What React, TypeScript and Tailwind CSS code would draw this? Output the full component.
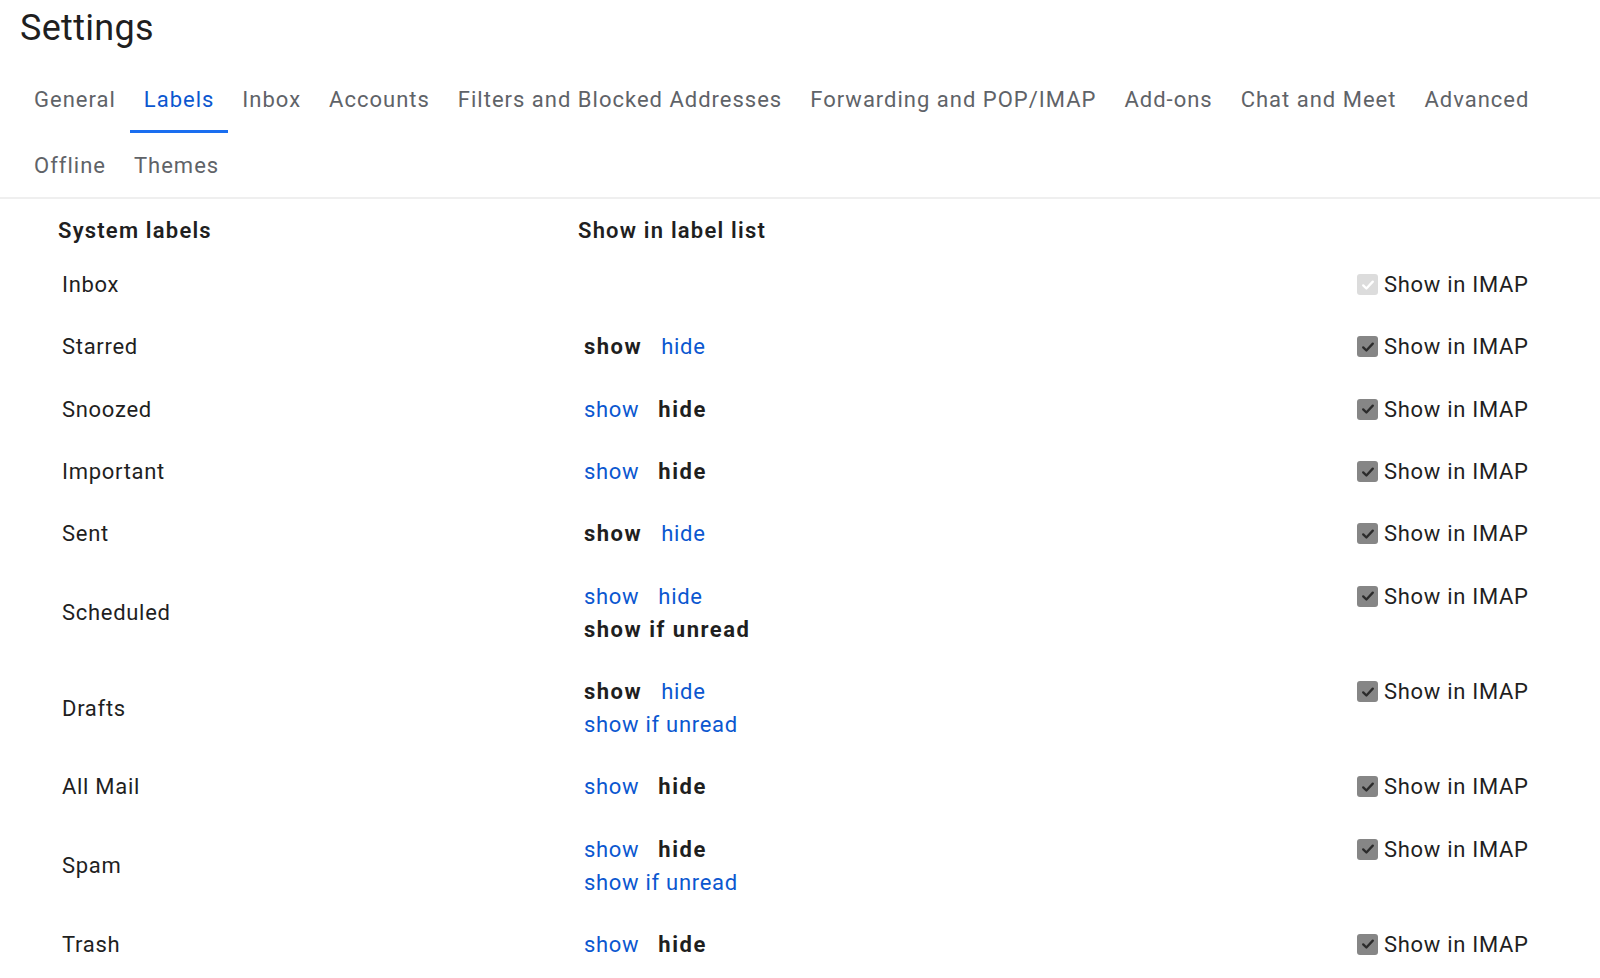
const TABS_ROW1 = [
  'General',
  'Labels',
  'Inbox',
  'Accounts',
  'Filters and Blocked Addresses',
  'Forwarding and POP/IMAP',
  'Add-ons',
  'Chat and Meet',
  'Advanced',
];
const TABS_ROW2 = ['Offline', 'Themes'];

type Choice = 'show' | 'hide' | 'unread';

interface LabelRow {
  name: string;
  selected?: Choice;
  unread?: boolean; // offers "show if unread"
  imapDisabled?: boolean;
}

const ROWS: LabelRow[] = [
  { name: 'Inbox', imapDisabled: true },
  { name: 'Starred', selected: 'show' },
  { name: 'Snoozed', selected: 'hide' },
  { name: 'Important', selected: 'hide' },
  { name: 'Sent', selected: 'show' },
  { name: 'Scheduled', selected: 'unread', unread: true },
  { name: 'Drafts', selected: 'show', unread: true },
  { name: 'All Mail', selected: 'hide' },
  { name: 'Spam', selected: 'hide', unread: true },
  { name: 'Trash', selected: 'hide' },
];

function Tab({ label, active }: { label: string; active?: boolean }) {
  return (
    <div
      className={`px-[14px] flex items-center h-full border-b-[3px] tracking-[1px] ${
        active ? 'text-[#0b57d0] border-[#1a6ef0]' : 'text-[#5f6368] border-transparent'
      }`}
    >
      <span className="pt-[3px]">{label}</span>
    </div>
  );
}

function Option({ text, selected }: { text: string; selected: boolean }) {
  return selected ? (
    <span className="font-bold tracking-[1.5px] text-[#1f1f1f]">{text}</span>
  ) : (
    <span className="text-[#0b57d0] cursor-pointer">{text}</span>
  );
}

function Checkbox({ disabled }: { disabled?: boolean }) {
  return (
    <div
      className={`w-[21px] h-[21px] rounded-[3px] flex items-center justify-center ${
        disabled ? 'bg-[#dcdcdc]' : 'bg-[#868686]'
      }`}
    >
      <svg width="16" height="16" viewBox="0 0 16 16" fill="none">
        <path
          d="M3.2 8.4 L6.4 11.5 L12.8 4.6"
          stroke={disabled ? '#ffffff' : '#2b2b2b'}
          strokeWidth="2.3"
          strokeLinecap="round"
          strokeLinejoin="round"
        />
      </svg>
    </div>
  );
}

export default function App() {
  return (
    <div className="min-h-screen bg-white font-['Roboto','Liberation_Sans',sans-serif] text-[#1f1f1f]">
      <h1 className="pl-[20px] pt-[6px] text-[36px] leading-[44px] font-normal tracking-[0.3px] text-[#1f1f1f]">
        Settings
      </h1>

      <div className="pl-[20px] pt-[16px] text-[22px] border-b-2 border-[#efefef]">
        <div className="flex h-[67px]">
          {TABS_ROW1.map((t) => (
            <Tab key={t} label={t} active={t === 'Labels'} />
          ))}
        </div>
        <div className="flex h-[64px]">
          {TABS_ROW2.map((t) => (
            <Tab key={t} label={t} />
          ))}
        </div>
      </div>

      <div className="text-[22px] leading-[33px] tracking-[0.7px]">
        <div className="flex pt-[15px] pb-[6.5px] font-semibold tracking-[1.2px]">
          <div className="w-[578px] pl-[58px]">System labels</div>
          <div className="w-[779px]">Show in label list</div>
        </div>

        {ROWS.map((row) => (
          <div key={row.name} className="flex py-[14.67px]">
            <div className="w-[578px] pl-[62px] flex items-center">{row.name}</div>
            <div className="w-[779px] pl-[6px]">
              {row.selected && (
                <>
                  <div className="flex gap-[19px]">
                    <Option text="show" selected={row.selected === 'show'} />
                    <Option text="hide" selected={row.selected === 'hide'} />
                  </div>
                  {row.unread && (
                    <div>
                      <Option text="show if unread" selected={row.selected === 'unread'} />
                    </div>
                  )}
                </>
              )}
            </div>
            <div className="flex items-start">
              <div className="flex items-center gap-[6px] h-[33px]">
                <Checkbox disabled={row.imapDisabled} />
                <span>Show in IMAP</span>
              </div>
            </div>
          </div>
        ))}
      </div>
    </div>
  );
}
